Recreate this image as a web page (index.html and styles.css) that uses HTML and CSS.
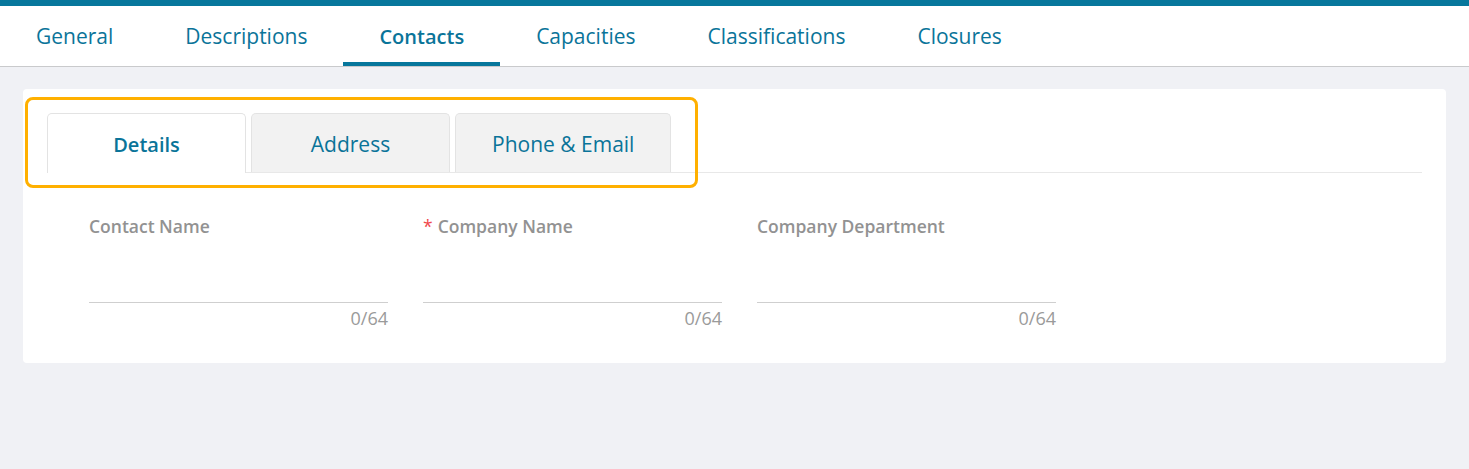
FILE: index.html
```html
<!DOCTYPE html>
<html lang="en">
<head>
<meta charset="utf-8">
<title>Contacts</title>
<link rel="stylesheet" href="styles.css">
</head>
<body>
<div class="topbar"></div>
<nav class="main-tabs">
  <a class="main-tab">General</a>
  <a class="main-tab">Descriptions</a>
  <a class="main-tab active">Contacts</a>
  <a class="main-tab">Capacities</a>
  <a class="main-tab">Classifications</a>
  <a class="main-tab">Closures</a>
</nav>
<main class="content">
  <section class="card">
    <div class="sub-tabs">
      <div class="sub-tab active">Details</div>
      <div class="sub-tab">Address</div>
      <div class="sub-tab">Phone &amp; Email</div>
      <div class="highlight"></div>
    </div>
    <div class="fields">
      <div class="field">
        <label class="label">Contact Name</label>
        <div class="input"></div>
        <div class="counter">0/64</div>
      </div>
      <div class="field">
        <label class="label"><span class="req">*</span>Company Name</label>
        <div class="input"></div>
        <div class="counter">0/64</div>
      </div>
      <div class="field">
        <label class="label">Company Department</label>
        <div class="input"></div>
        <div class="counter">0/64</div>
      </div>
    </div>
  </section>
</main>
</body>
</html>
```
FILE: styles.css
```css
* { box-sizing: border-box; }
html, body {
  margin: 0;
  padding: 0;
  background: #f0f1f5;
  font-family: "Open Sans", "Noto Sans", sans-serif;
}
.topbar {
  height: 6px;
  background: #07779c;
}
.main-tabs {
  display: flex;
  height: 61px;
  background: #fff;
  border-bottom: 1px solid #c9cacc;
}
.main-tab {
  display: flex;
  align-items: center;
  padding: 4px 36px 0;
  font-size: 21px;
  color: #0a7499;
  border-bottom: 4px solid transparent;
}
.main-tab.active {
  font-size: 20px;
  font-weight: 600;
  border-bottom-color: #07779c;
}
.content {
  padding: 22px 23px;
}
.card {
  background: #fff;
  border-radius: 4px;
  padding: 24px 24px 36px;
  height: 274px;
}
.sub-tabs {
  position: relative;
  display: flex;
  gap: 5px;
  height: 60px;
  border-bottom: 1px solid #e8e8e8;
}
.sub-tab {
  display: flex;
  align-items: center;
  justify-content: center;
  min-width: 199px;
  padding: 2px 36px 0;
  font-size: 21px;
  color: #0a7499;
  background: #f2f2f2;
  border: 1px solid #e3e3e3;
  border-bottom: none;
  border-radius: 5px 5px 0 0;
}
.sub-tab.active {
  background: #fff;
  font-size: 20px;
  font-weight: 600;
  margin-bottom: -1px;
}
.sub-tab:nth-child(3) { min-width: 215px; }
.highlight {
  position: absolute;
  left: -22px;
  top: -16px;
  width: 673px;
  height: 91px;
  border: 3px solid #ffb000;
  border-radius: 8px;
  pointer-events: none;
}
.fields {
  display: flex;
  gap: 35px;
  padding: 41px 0 0 42px;
}
.field {
  width: 299px;
  display: flex;
  flex-direction: column;
}
.label {
  font-size: 17.5px;
  font-weight: 600;
  color: #929292;
  line-height: 24px;
  height: 24px;
}
.req {
  color: #f0494d;
  font-weight: 400;
  margin-right: 5px;
}
.input {
  height: 65px;
  border-bottom: 1px solid #cfcfcf;
}
.counter {
  text-align: right;
  font-size: 18px;
  color: #9a9a9a;
  line-height: 24px;
  margin-top: 3px;
}
```
